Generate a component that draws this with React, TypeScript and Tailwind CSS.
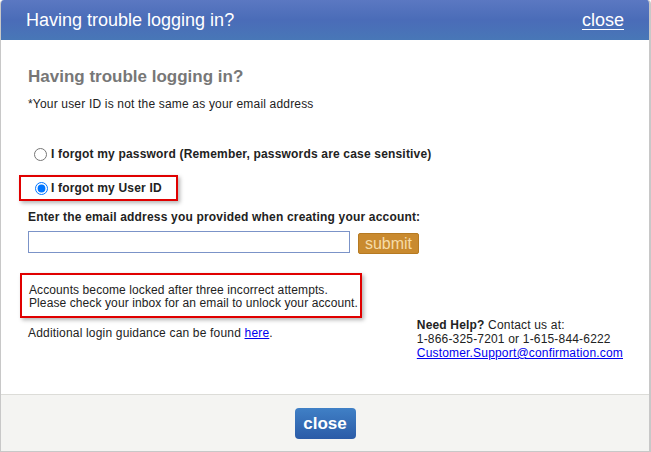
import React from "react";

export default function App() {
  return (
    <div className="w-[651px] h-[452px] bg-white font-['Liberation_Sans',Arial,sans-serif] text-[#222]">
      <div className="w-full h-full flex flex-col border-l border-r-2 border-b border-[#c8c8c8] rounded-t-[4px] overflow-hidden">
        {/* Header */}
        <header className="h-[40px] shrink-0 flex items-center justify-between pl-[25px] pr-[25px] bg-gradient-to-b from-[#5b78c2] via-[#4a6cb8] to-[#4877b7]">
          <h1 className="text-[18px] text-white leading-none">Having trouble logging in?</h1>
          <a href="#" className="text-[18px] text-white underline underline-offset-[3px] leading-none">close</a>
        </header>

        {/* Body */}
        <div className="flex-1 pl-[27px] pr-[26px] pt-[27px] text-[12px] tracking-[0.18px]">
          <h2 className="text-[17px] leading-[20px] font-bold text-[#777] tracking-normal">Having trouble logging in?</h2>
          <p className="mt-[10px] leading-[14px]">*Your user ID is not the same as your email address</p>

          <label className="mt-[36px] pl-[6px] flex items-center h-[14px] font-bold">
            <input type="radio" name="trouble" className="w-[13px] h-[13px] m-0 mr-[4px]" />
            I forgot my password (Remember, passwords are case sensitive)
          </label>

          <div className="mt-[14px] -ml-[9px] w-[159px] h-[26px] border-2 border-[#e00000] shadow-[2px_2px_4px_rgba(0,0,0,0.3)] flex items-center pl-[14px]">
            <label className="flex items-center font-bold">
              <input type="radio" name="trouble" defaultChecked className="w-[13px] h-[13px] m-0 mr-[3px]" />
              I forgot my User ID
            </label>
          </div>

          <p className="mt-[9px] leading-[14px] font-bold">Enter the email address you provided when creating your account:</p>
          <div className="mt-[7px] flex items-start gap-[8px]">
            <input type="text" className="w-[322px] h-[22px] border border-[#7b93c8] outline-none px-1" />
            <button className="mt-[2px] w-[61px] h-[21px] rounded-[2px] bg-[#c98a2f] border border-[#b67a22] text-[16px] leading-none tracking-normal text-[#f6dca8]">submit</button>
          </div>

          <div className="mt-[19px] -ml-[8px] w-[342px] h-[45px] border-2 border-[#e00000] shadow-[2px_2px_4px_rgba(0,0,0,0.3)] pl-[7px] pt-[9px] leading-[13px] whitespace-nowrap tracking-[0.1px]">
            <p>Accounts become locked after three incorrect attempts.</p>
            <p>Please check your inbox for an email to unlock your account.</p>
          </div>

          <div className="flex items-start justify-between leading-[14px]">
            <p className="mt-[8px]">
              Additional login guidance can be found <a href="#" className="text-[#0000ee] underline">here</a>.
            </p>
            <div>
              <p><span className="font-bold">Need Help?</span> Contact us at:</p>
              <p>1-866-325-7201 or 1-615-844-6222</p>
              <a href="#" className="text-[#0000ee] underline">Customer.Support@confirmation.com</a>
            </div>
          </div>
        </div>

        {/* Footer */}
        <footer className="h-[57px] shrink-0 bg-[#f4f4f2] border-t border-[#dcdcd8] flex items-center justify-center">
          <button className="mt-[1px] w-[61px] h-[31px] rounded-[4px] bg-gradient-to-b from-[#4080c6] to-[#2b5ba7] text-white text-[17px] font-semibold leading-none">close</button>
        </footer>
      </div>
    </div>
  );
}
